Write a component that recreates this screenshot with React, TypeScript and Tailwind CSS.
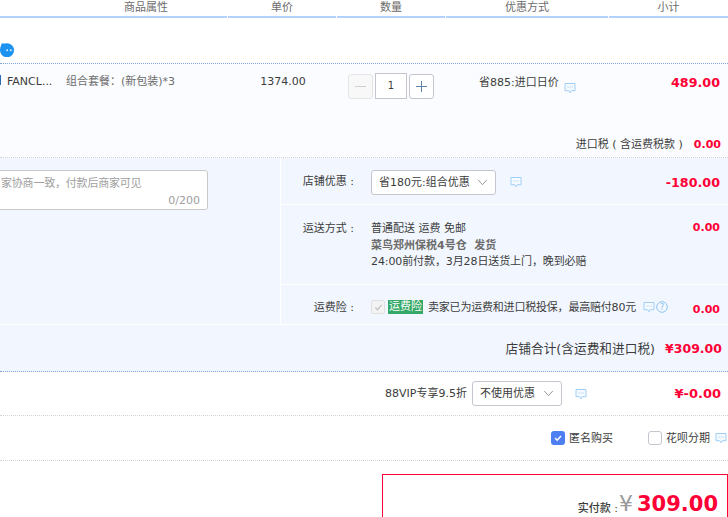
import React from "react";

const Bubble = ({ className = "" }: { className?: string }) => (
  <svg viewBox="0 0 12 12" width="12" height="12" className={className} fill="none">
    <path d="M1 1.5h10v7.2H7.2L6 10.8 4.6 8.7H1z" fill="#f4faff" stroke="#a0cef5" strokeWidth="1" />
    <path d="M3.5 5h1M5.6 5h1M7.7 5h1" stroke="#a0cef5" strokeWidth="0.9" />
  </svg>
);

const Chevron = () => (
  <svg viewBox="0 0 12 8" width="11" height="7" fill="none" className="shrink-0">
    <path d="M1 1l5 5.5L11 1" stroke="#8c8c8c" strokeWidth="1" />
  </svg>
);

const Select = ({ label, w }: { label: string; w: string }) => (
  <div className={`flex h-[25px] items-center justify-between rounded-[3px] border border-[#c5c5d0] bg-white pl-[7px] pr-[7px] text-[11px] text-[#3c3c3c] ${w}`}>
    <span className="pt-px">{label}</span>
    <Chevron />
  </div>
);

export default function App() {
  return (
    <div className="h-[517px] w-[728px] overflow-hidden bg-white text-[11px] leading-[16px] text-[#3c3c3c] [font-family:'DejaVu_Sans','Noto_Sans_CJK_SC',sans-serif]">
      {/* header */}
      <div className="grid h-[18px] grid-cols-[228px_109px_109px_163px_119px] gap-0 text-[#6c6c6c]">
        <div className="mr-px border-b-2 border-[#b2d1ff] pl-[65px] text-center">商品属性</div>
        <div className="mr-px border-b-2 border-[#b2d1ff] text-center">单价</div>
        <div className="mr-px border-b-2 border-[#b2d1ff] text-center">数量</div>
        <div className="mr-px border-b-2 border-[#b2d1ff] text-center">优惠方式</div>
        <div className="border-b-2 border-[#b2d1ff] text-center">小计</div>
      </div>

      {/* shop row */}
      <div className="flex h-[46px] items-end border-b border-dotted border-[#80a2e0] pb-[6px]">
        <svg viewBox="0 0 14 15" width="14" height="15">
          <path d="M2 1C3 2 4.5 1.2 7 1.2a7 7 0 1 1-7 7C0 5.5 1 3.5 2 1z" fill="#1b93f0" />
          <circle cx="7.2" cy="8.2" r="1" fill="#d8ecff" />
          <circle cx="10.8" cy="8.2" r="1" fill="#d8ecff" />
        </svg>
      </div>

      {/* item row */}
      <div className="h-[94px] border-b border-dotted border-[#d5d5d5] bg-[#fbfcff]">
        <div className="grid h-[70px] grid-cols-[228px_109px_109px_163px_119px]">
          <div className="flex items-start pt-[10px]">
            <div className="mt-[1px] h-[10px] w-px bg-[#2b6cb8]" />
            <span className="ml-[6px] w-[53px] shrink-0 text-[#3c3c3c]">FANCL...</span>
            <span className="ml-[6px] whitespace-nowrap text-[#6c6c6c]">组合套餐：(新包装)*3</span>
          </div>
          <div className="pl-[1px] pt-[10px] text-center">1374.00</div>
          <div className="flex items-start gap-[2px] pl-[11px] pt-[10px]">
            <div className="flex h-[25px] w-[25px] items-center justify-center rounded-[3px] border border-[#e5e5e5] bg-[#f8f8f8]">
              <div className="h-px w-[11px] bg-[#cfcfcf]" />
            </div>
            <div className="-mt-px flex h-[26px] w-[32px] items-center justify-center border border-[#c5c5d0] bg-white text-[10px]">1</div>
            <div className="relative flex h-[25px] w-[25px] items-center justify-center rounded-[3px] border border-[#c5c5d0] bg-white">
              <div className="h-px w-[11px] bg-[#5f83a6]" />
              <div className="absolute h-[11px] w-px bg-[#5f83a6]" />
            </div>
          </div>
          <div className="flex items-start pl-[33px] pt-[11px]">
            <span className="whitespace-nowrap">省885:进口日价</span>
            <Bubble className="ml-[5px] mt-[7px]" />
          </div>
          <div className="pr-[8px] pt-[11px] text-right text-[12.7px] font-bold text-[#ff0036]">489.00</div>
        </div>
        <div className="flex h-[24px] items-end justify-end pb-[5px] pr-[7px]">
          <span className="whitespace-nowrap">进口税 ( 含运费税款 )</span>
          <span className="ml-[11px] font-bold text-[#ff0036]">0.00</span>
        </div>
      </div>

      {/* options */}
      <div className="flex h-[167px] border-b border-white bg-[#f2f7ff]">
        <div className="w-[280px] shrink-0 pt-[12px]">
          <div className="-ml-[10px] h-[40px] w-[218px] rounded-[3px] border border-[#c8c8c8] bg-white pl-[10px] pr-[7px] pt-[4px] leading-[17px]">
            <div className="whitespace-nowrap tracking-[-0.2px] text-[#a0a0a0]">家协商一致，付款后商家可见</div>
            <div className="text-right text-[#a0a0a0]">0/200</div>
          </div>
        </div>
        <div className="flex flex-1 flex-col border-l border-white">
          <div className="flex h-[47px] items-start border-b border-white pt-[12px]">
            <div className="w-[73px] whitespace-nowrap pt-[4px] text-right">店铺优惠 :</div>
            <div className="ml-[17px]"><Select label="省180元:组合优惠" w="w-[125px]" /></div>
            <Bubble className="ml-[14px] mt-[6px]" />
            <div className="ml-auto pr-[8px] pt-[5px] text-[12.7px] font-bold text-[#ff0036]">-180.00</div>
          </div>
          <div className="flex h-[80px] items-start border-b border-white pt-[15px]">
            <div className="w-[73px] whitespace-nowrap pt-px text-right">运送方式 :</div>
            <div className="ml-[17px] pt-px leading-[16.5px]">
              <div>普通配送 运费 免邮</div>
              <div className="font-bold text-[#6c6c6c]">菜鸟郑州保税4号仓&nbsp; 发货</div>
              <div className="tracking-[-0.1px]">24:00前付款，3月28日送货上门，晚到必赔</div>
            </div>
            <div className="ml-auto pr-[8px] font-bold text-[#ff0036]">0.00</div>
          </div>
          <div className="flex h-[39px] items-start pt-[15px]">
            <div className="w-[73px] whitespace-nowrap text-right">运费险 :</div>
            <div className="ml-[17px] flex h-[14px] w-[14px] items-center justify-center rounded-[2px] border border-[#e0e0e0] bg-[#f3f3f3]">
              <svg viewBox="0 0 10 10" width="9" height="9" fill="none"><path d="M1.5 5l2.5 2.5L8.5 2" stroke="#c4c4c4" strokeWidth="1.4" /></svg>
            </div>
            <span className="ml-[3px] h-[14px] bg-[#34a866] px-[1px] leading-[14px] text-white">运费险</span>
            <span className="ml-[5px] whitespace-nowrap tracking-[-0.2px]">卖家已为运费和进口税投保，最高赔付80元</span>
            <Bubble className="ml-[7px] mt-[1px]" />
            <svg viewBox="0 0 12 12" width="12" height="12" fill="none" className="ml-px mt-[1px]">
              <circle cx="6" cy="6" r="5.3" stroke="#8fc4ee" />
              <text x="6" y="9" textAnchor="middle" fontSize="8.5" fill="#8fc4ee">?</text>
            </svg>
            <div className="ml-auto pr-[8px] pt-[2px] font-bold text-[#ff0036]">0.00</div>
          </div>
        </div>
      </div>

      {/* shop total */}
      <div className="flex h-[47px] items-center justify-end gap-[10px] border-b border-dotted border-[#80a2e0] bg-[#f2f7ff] pr-[6px] pt-px">
        <span className="text-[12.7px]">店铺合计(含运费和进口税)</span>
        <span className="text-[12.5px] font-bold text-[#ff0036]">¥309.00</span>
      </div>

      {/* vip */}
      <div className="flex h-[44px] items-center border-b border-dotted border-[#d5d5d5]">
        <span className="ml-[385px] whitespace-nowrap">88VIP专享9.5折</span>
        <div className="ml-[5px]"><Select label="不使用优惠" w="w-[90px]" /></div>
        <Bubble className="ml-[13px]" />
        <div className="ml-auto pr-[7px] pt-px text-[13px] font-bold text-[#ff0036]">¥-0.00</div>
      </div>

      {/* options */}
      <div className="flex h-[45px] items-center border-b border-dotted border-[#d5d5d5] pb-[1px]">
        <div className="ml-[551px] flex h-[14px] w-[14px] items-center justify-center rounded-[3px] bg-[#4d7ff2]">
          <svg viewBox="0 0 10 10" width="10" height="10" fill="none"><path d="M2 5l2.2 2.2L8 3" stroke="#fff" strokeWidth="1.5" /></svg>
        </div>
        <span className="ml-[4px] pt-[2px]">匿名购买</span>
        <div className="ml-[35px] h-[14px] w-[14px] rounded-[3px] border border-[#c5c5d0] bg-white" />
        <span className="ml-[4px] pt-[2px]">花呗分期</span>
        <Bubble className="ml-[5px] mt-[1px] shrink-0" />
      </div>

      {/* pay box */}
      <div className="ml-[382px] mt-[13px] flex h-[80px] items-start justify-end border border-[#ff0036] pr-[9px] pt-[16px]">
        <span className="mt-[10px] whitespace-nowrap text-[11px] font-medium">实付款 :</span>
        <span className="ml-px text-[22px] leading-[26px] text-[#999]">¥</span>
        <span className="ml-[4px] text-[21px] font-bold leading-[26px] text-[#ff0036]">309.00</span>
      </div>
    </div>
  );
}
